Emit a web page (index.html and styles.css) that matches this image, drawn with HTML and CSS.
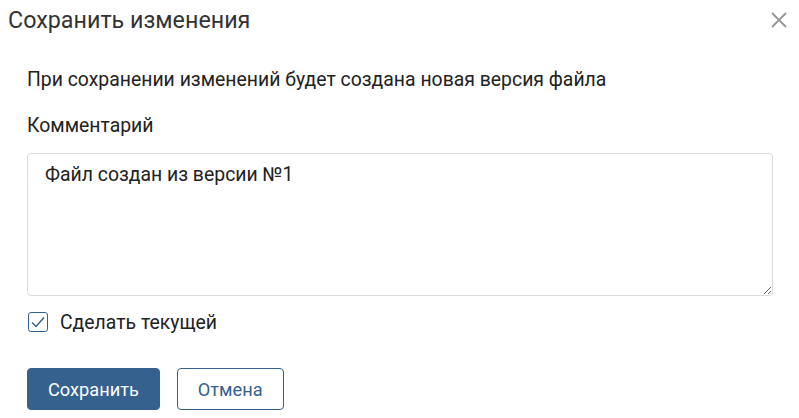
FILE: index.html
```html
<!DOCTYPE html>
<html>
  <head>
    <meta charset="utf-8">
    <title>Сохранить изменения</title>
    <link rel="stylesheet" href="styles.css">
  </head>
  <body>
    <div class="dialog">
      <div class="header">
        <div class="title">Сохранить изменения</div>
        <button class="close" aria-label="Закрыть">
          <svg width="18" height="18" viewBox="0 0 18 18"><path d="M2 2L16 16M16 2L2 16" stroke="#999" stroke-width="2" fill="none"/></svg>
        </button>
      </div>
      <div class="body">
        <p class="note">При сохранении изменений будет создана новая версия файла</p>
        <label class="label" for="comment">Комментарий</label>
        <textarea id="comment" class="comment">Файл создан из версии №1</textarea>
        <label class="check">
          <span class="box">
            <svg width="14" height="12" viewBox="0 0 14 12"><path d="M1 6.5L5 10.5L13 1.5" stroke="#35618f" stroke-width="1.5" fill="none"/></svg>
          </span>
          Сделать текущей
        </label>
      </div>
      <div class="footer">
        <button class="btn primary">Сохранить</button>
        <button class="btn">Отмена</button>
      </div>
    </div>
  </body>
</html>
```

FILE: styles.css
```css
* { box-sizing: border-box; }
body {
  margin: 0;
  font-family: Roboto, "Liberation Sans", sans-serif;
  color: #222;
  background: #fff;
}
.dialog {
  width: 799px;
  height: 418px;
}
.header {
  display: flex;
  align-items: center;
  justify-content: space-between;
  height: 40px;
  padding: 0 11px 0 8px;
}
.title {
  font-size: 23.3px;
  color: #333;
}
.close {
  border: 0;
  background: none;
  padding: 0;
  display: flex;
}
.body {
  padding: 27px 26px 0 27px;
}
.note {
  margin: 0 0 20px;
  font-size: 19.4px;
  line-height: 26px;
}
.label {
  display: block;
  font-size: 19.4px;
  line-height: 26px;
  margin-bottom: 14px;
}
.comment {
  display: block;
  width: 100%;
  height: 143px;
  border: 1px solid #dcdcdc;
  border-radius: 4px;
  padding: 9px 17px;
  font-family: inherit;
  font-size: 19.4px;
  line-height: 24px;
  color: #222;
  resize: vertical;
}
.check {
  display: flex;
  align-items: center;
  gap: 12px;
  margin-top: 16px;
  height: 20px;
  font-size: 19.4px;
}
.box {
  width: 20px;
  height: 20px;
  margin-left: 1px;
  border: 1.5px solid #35618f;
  border-radius: 3px;
  display: flex;
  align-items: center;
  justify-content: center;
}
.footer {
  display: flex;
  gap: 17px;
  padding: 36px 27px 0;
}
.btn {
  height: 42px;
  padding: 0 20px;
  border: 1px solid #35618f;
  border-radius: 4px;
  background: #fff;
  color: #35618f;
  font-family: inherit;
  font-size: 18.2px;
}
.btn.primary {
  background: #35618f;
  color: #fff;
}
```
